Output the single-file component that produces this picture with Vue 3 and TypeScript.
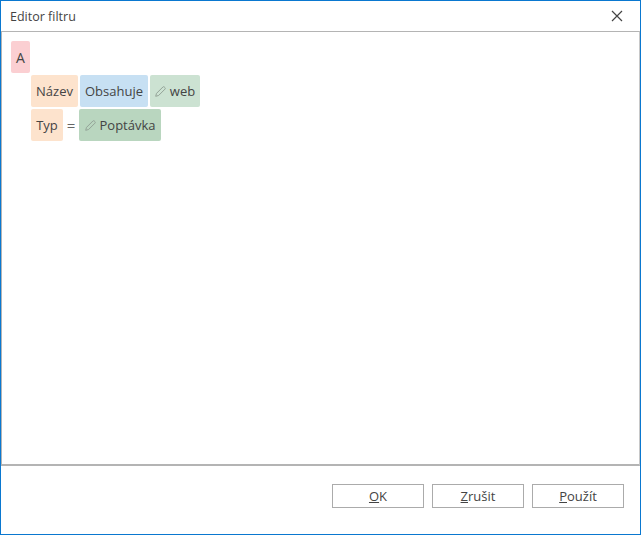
<script setup lang="ts">
const rows = [
  [
    { text: 'Název', cls: 'orange', w: 47 },
    { text: 'Obsahuje', cls: 'blue', w: 68 },
    { text: 'web', cls: 'green', w: 50, edit: true },
  ],
  [
    { text: 'Typ', cls: 'orange', w: 32 },
    { text: '=', cls: 'op', w: 12 },
    { text: 'Poptávka', cls: 'dark', w: 82, edit: true },
  ],
]
</script>

<template>
  <div class="window">
    <header class="title">
      <span>Editor filtru</span>
      <svg class="close" width="12" height="12" viewBox="0 0 12 12">
        <path d="M1 1 11 11M11 1 1 11" stroke="#444" stroke-width="1.2" fill="none" />
      </svg>
    </header>
    <main class="content">
      <div class="chip red">A</div>
      <div v-for="(row, i) in rows" :key="i" class="row">
        <div
          v-for="c in row"
          :key="c.text"
          class="chip"
          :class="c.cls"
          :style="{ width: c.w + 'px' }"
        >
          <svg v-if="c.edit" class="pen" width="11" height="11" viewBox="0 0 11 11">
            <path d="M.7 10.300 1.500 7.400 7.900 1a1 1 0 0 1 1.400 0l.7.7a1 1 0 0 1 0 1.400L3.600 9.500Z" fill="none" stroke="#94a398" stroke-width="1" />
          </svg>
          <span>{{ c.text }}</span>
        </div>
      </div>
    </main>
    <footer class="footer">
      <button class="btn"><u>O</u>K</button>
      <button class="btn"><u>Z</u>rušit</button>
      <button class="btn"><u>P</u>oužít</button>
    </footer>
  </div>
</template>

<style>
html, body { margin: 0; background: #fff; }
</style>

<style scoped>
.window {
  box-sizing: border-box;
  width: 641px;
  height: 535px;
  border: 1px solid #0a78d0;
  display: flex;
  flex-direction: column;
  font-family: "Open Sans", "Noto Sans", sans-serif;
  font-size: 13px;
  color: #444;
  background: #fff;
}
.title {
  height: 30px;
  flex: none;
  display: flex;
  align-items: center;
  justify-content: space-between;
  padding: 0 17px 0 9px;
  font-size: 12.5px;
  color: #444;
}
.close { display: block; }
.content {
  flex: 1;
  box-sizing: border-box;
  border: 1px solid #b4b4b4;
  border-bottom-width: 2px;
  border-right-color: #c8c8c8;
  padding: 9px 0 0 9px;
  display: flex;
  flex-direction: column;
  align-items: flex-start;
  gap: 2px;
}
.row {
  display: flex;
  align-items: stretch;
  gap: 2px;
  margin-left: 20px;
}
.chip {
  box-sizing: border-box;
  height: 32px;
  display: flex;
  align-items: center;
  justify-content: center;
  gap: 4px;
  border-radius: 2px;
  white-space: nowrap;
}
.red { width: 19px; background: #fbcfd2; font-size: 14px; }
.orange { background: #fde3cd; }
.blue { background: #c7e0f3; }
.green { background: #cce2d2; }
.dark { background: #b9d6bf; }
.op { background: transparent; font-size: 15px; color: #666; }
.footer {
  height: 68px;
  flex: none;
  box-sizing: border-box;
  display: flex;
  justify-content: flex-end;
  gap: 8px;
  padding: 18px 16px 0 0;
}
.btn {
  width: 92px;
  height: 24px;
  box-sizing: border-box;
  border: 1px solid #ababab;
  background: #fff;
  font: inherit;
  color: #444;
  padding: 0;
  line-height: 20px;
}
</style>
